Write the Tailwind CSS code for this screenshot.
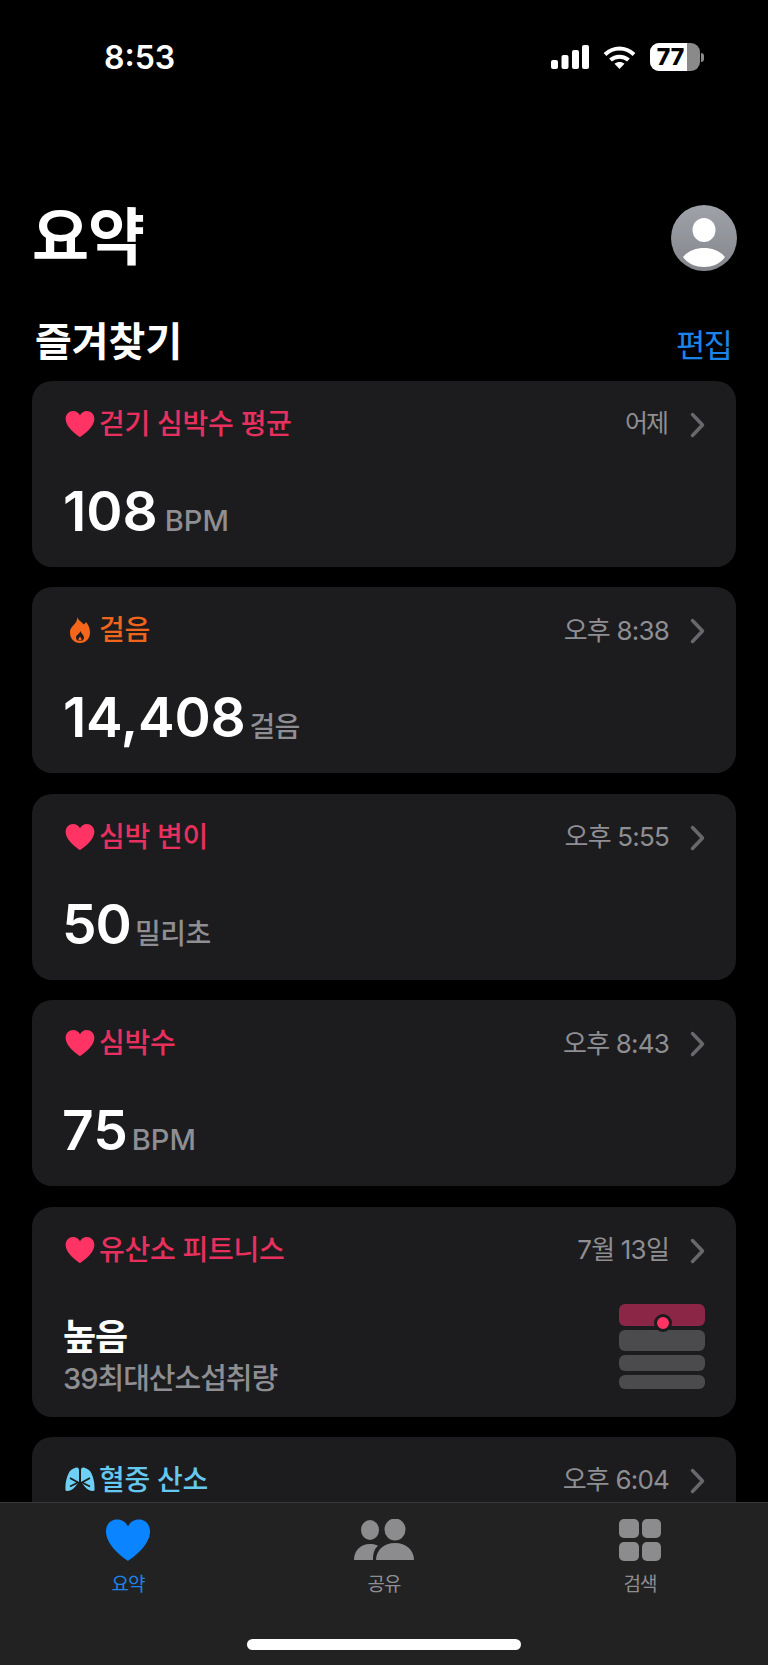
<!DOCTYPE html>
<html lang="ko">
<head>
    <meta charset="UTF-8">
    <meta name="viewport" content="width=device-width, initial-scale=1.0">
    <title>요약</title>
    <script src="https://cdn.jsdelivr.net/npm/@tailwindcss/browser@4"></script>
</head>
<body class="bg-black text-white font-['Inter','Noto_Sans_CJK_KR',sans-serif]">
<div class="relative h-[1665px] w-[768px] overflow-hidden">

    <!-- status bar -->
    <div class="flex h-[80px] items-start justify-between pt-[40px] pl-[104px] pr-[64px]">
        <span class="text-[32px] leading-[36px] font-semibold">8:53</span>
        <div class="flex items-center gap-[14px] pt-[3px]">
            <svg width="38" height="24" viewBox="0 0 38 24" fill="#fff">
                <rect x="0" y="15" width="7" height="9" rx="2"/>
                <rect x="10.5" y="10" width="7" height="14" rx="2"/>
                <rect x="21" y="5" width="7" height="19" rx="2"/>
                <rect x="31" y="0" width="7" height="24" rx="2"/>
            </svg>
            <svg width="33" height="23" viewBox="0 0 33 23" fill="none" stroke="#fff" stroke-width="4">
                <path d="M2 8.5C10.500 0.500 22.500 0.500 31 8.500"/>
                <path d="M7.500 14C12.500 9.500 20.500 9.500 25.500 14"/>
                <path d="M16.500 23L11.500 17.800C14.500 15.500 18.500 15.500 21.500 17.800Z" fill="#fff" stroke="none"/>
            </svg>
            <div class="flex items-center gap-[1px]">
                <div class="flex h-[28px] w-[50px] overflow-hidden rounded-[9px] bg-[#8a8a8a]">
                    <div class="flex h-full w-[37px] items-center justify-center bg-white pl-[4px] text-[23px] font-extrabold text-black">77</div>
                </div>
                <div class="h-[9px] w-[3px] rounded-r-full bg-[#8a8a8a]"></div>
            </div>
        </div>
    </div>

    <!-- title -->
    <div class="mt-[125px] flex items-center justify-between pl-[32px] pr-[31px]">
        <h1 class="text-[62px] leading-[66px] font-bold tracking-[-1px]">요약</h1>
        <svg width="66" height="66" viewBox="0 0 66 66">
            <defs>
                <linearGradient id="av" x1="0" y1="0" x2="0" y2="1">
                    <stop offset="0" stop-color="#9fa2a8"/>
                    <stop offset="1" stop-color="#84868c"/>
                </linearGradient>
            </defs>
            <circle cx="33" cy="33" r="33" fill="url(#av)"/>
            <ellipse cx="33" cy="25" rx="11.500" ry="12" fill="#fff"/>
            <path d="M12 52C17 46 25 43 33 43C41 43 49 46 54 52C49 59 41 62 33 62C25 62 17 59 12 52Z" fill="#fff"/>
        </svg>
    </div>

    <!-- section header -->
    <div class="mt-[45px] flex h-[51px] items-center justify-between pl-[35px] pr-[37px]">
        <h2 class="text-[40px] leading-[44px] font-semibold">즐겨찾기</h2>
        <span class="pt-[8px] text-[32px] leading-[36px] tracking-[-2px] text-[#1c84e8]">편집</span>
    </div>

    <!-- cards -->
    <div class="mt-[14px] flex flex-col gap-[20.400px] px-[32px]">

        <section class="flex h-[186px] flex-col rounded-[20px] bg-[#1c1c1e] pt-[24px] pr-[31px] pl-[33px]">
            <div class="flex h-[38px] items-center">
                <svg width="30" height="28" viewBox="0 0 24 22" fill="#ff3364"><path d="M12 21.500C12 21.500 0.500 14.500 0.500 6.800C0.500 3 3.300 0.500 6.500 0.500C9 0.500 11 1.800 12 4C13 1.800 15 0.500 17.500 0.500C20.700 0.500 23.500 3 23.500 6.800C23.500 14.500 12 21.500 12 21.500Z"/></svg>
                <span class="ml-[4px] text-[28px] font-medium tracking-[-0.300px] text-[#e8305f]">걷기 심박수 평균</span>
                <span class="ml-auto text-[25px] tracking-[-2px] text-[#8e8e93]">어제</span>
                <svg class="ml-[23px] mt-[2px]" width="15" height="26" viewBox="0 0 15 26" fill="none" stroke="#68686c" stroke-width="3.500" stroke-linecap="round" stroke-linejoin="round"><path d="M2.500 2.500L12.500 13L2.500 23.500"/></svg>
            </div>
            <div class="-ml-[2px] mt-[38px] flex items-baseline">
                <span class="text-[55px] leading-[60px] font-semibold">108</span>
                <span class="ml-[7px] text-[29px] font-medium text-[#8e8e93]">BPM</span>
            </div>
        </section>

        <section class="flex h-[186px] flex-col rounded-[20px] bg-[#1c1c1e] pt-[24px] pr-[31px] pl-[33px]">
            <div class="flex h-[38px] items-center">
                <svg class="ml-[5px] mr-[5px]" width="20" height="26" viewBox="0 0 20 26"><path d="M7 0C8 3 11 4.500 14 7.500C15 6.500 15.500 6 16 5C18.500 8 20 11 20 15.500C20 21.500 16 26 10 26C4 26 0 21.500 0 15.500C0 11 3 9 5 6.500C6.500 4.500 7.500 2.500 7 0Z" fill="#f4661b"/><path d="M10.500 14C11 16.500 14 18 14 20.500C14 23 12 24 10 24C8 24 6 23 6 20.500C6 18 9.500 17 10.500 14Z" fill="#1c1c1e"/><path d="M10 19.500C10.500 20.500 11.500 21 11.500 22C11.500 23 10.800 23.500 10 23.500C9.200 23.500 8.500 23 8.500 22C8.500 21 9.500 20.500 10 19.500Z" fill="#f4661b"/></svg>
                <span class="ml-[4px] text-[28px] font-medium tracking-[-0.300px] text-[#f0641c]">걸음</span>
                <span class="ml-auto text-[26px] tracking-[-0.800px] text-[#8e8e93]">오후 8:38</span>
                <svg class="ml-[21px] mt-[2px]" width="15" height="26" viewBox="0 0 15 26" fill="none" stroke="#68686c" stroke-width="3.500" stroke-linecap="round" stroke-linejoin="round"><path d="M2.500 2.500L12.500 13L2.500 23.500"/></svg>
            </div>
            <div class="-ml-[2px] mt-[38px] flex items-baseline">
                <span class="text-[55px] leading-[60px] font-semibold tracking-[-0.200px]">14,408</span>
                <span class="ml-[4px] text-[28px] font-medium tracking-[-0.800px] text-[#8e8e93]">걸음</span>
            </div>
        </section>

        <section class="flex h-[186px] flex-col rounded-[20px] bg-[#1c1c1e] pt-[24px] pr-[31px] pl-[33px]">
            <div class="flex h-[38px] items-center">
                <svg width="30" height="28" viewBox="0 0 24 22" fill="#ff3364"><path d="M12 21.500C12 21.500 0.500 14.500 0.500 6.800C0.500 3 3.300 0.500 6.500 0.500C9 0.500 11 1.800 12 4C13 1.800 15 0.500 17.500 0.500C20.700 0.500 23.500 3 23.500 6.800C23.500 14.500 12 21.500 12 21.500Z"/></svg>
                <span class="ml-[4px] text-[28px] font-medium tracking-[-0.300px] text-[#e8305f]">심박 변이</span>
                <span class="ml-auto text-[26px] tracking-[-0.800px] text-[#8e8e93]">오후 5:55</span>
                <svg class="ml-[21px] mt-[2px]" width="15" height="26" viewBox="0 0 15 26" fill="none" stroke="#68686c" stroke-width="3.500" stroke-linecap="round" stroke-linejoin="round"><path d="M2.500 2.500L12.500 13L2.500 23.500"/></svg>
            </div>
            <div class="-ml-[3px] mt-[38px] flex items-baseline">
                <span class="text-[55px] leading-[60px] font-semibold tracking-[-1px]">50</span>
                <span class="ml-[4px] text-[28px] font-medium tracking-[-0.500px] text-[#8e8e93]">밀리초</span>
            </div>
        </section>

        <section class="flex h-[186px] flex-col rounded-[20px] bg-[#1c1c1e] pt-[24px] pr-[31px] pl-[33px]">
            <div class="flex h-[38px] items-center">
                <svg width="30" height="28" viewBox="0 0 24 22" fill="#ff3364"><path d="M12 21.500C12 21.500 0.500 14.500 0.500 6.800C0.500 3 3.300 0.500 6.500 0.500C9 0.500 11 1.800 12 4C13 1.800 15 0.500 17.500 0.500C20.700 0.500 23.500 3 23.500 6.800C23.500 14.500 12 21.500 12 21.500Z"/></svg>
                <span class="ml-[4px] text-[28px] font-medium tracking-[-0.300px] text-[#e8305f]">심박수</span>
                <span class="ml-auto text-[26px] tracking-[-0.800px] text-[#8e8e93]">오후 8:43</span>
                <svg class="ml-[21px] mt-[2px]" width="15" height="26" viewBox="0 0 15 26" fill="none" stroke="#68686c" stroke-width="3.500" stroke-linecap="round" stroke-linejoin="round"><path d="M2.500 2.500L12.500 13L2.500 23.500"/></svg>
            </div>
            <div class="-ml-[3px] mt-[38px] flex items-baseline">
                <span class="text-[55px] leading-[60px] font-semibold">75</span>
                <span class="ml-[4px] text-[29px] font-medium text-[#8e8e93]">BPM</span>
            </div>
        </section>

        <section class="flex h-[210px] flex-col rounded-[20px] bg-[#1c1c1e] pt-[24px] pr-[31px] pl-[33px]">
            <div class="flex h-[38px] items-center">
                <svg width="30" height="28" viewBox="0 0 24 22" fill="#ff3364"><path d="M12 21.500C12 21.500 0.500 14.500 0.500 6.800C0.500 3 3.300 0.500 6.500 0.500C9 0.500 11 1.800 12 4C13 1.800 15 0.500 17.500 0.500C20.700 0.500 23.500 3 23.500 6.800C23.500 14.500 12 21.500 12 21.500Z"/></svg>
                <span class="ml-[4px] text-[28px] font-medium tracking-[-0.300px] text-[#e8305f]">유산소 피트니스</span>
                <span class="ml-auto text-[26px] tracking-[-0.800px] text-[#8e8e93]">7월 13일</span>
                <svg class="ml-[21px] mt-[2px]" width="15" height="26" viewBox="0 0 15 26" fill="none" stroke="#68686c" stroke-width="3.500" stroke-linecap="round" stroke-linejoin="round"><path d="M2.500 2.500L12.500 13L2.500 23.500"/></svg>
            </div>
            <div class="flex items-start justify-between">
                <div class="-ml-[2px] pt-[45px]">
                    <div class="text-[36px] leading-[46px] font-semibold tracking-[-1px]">높음</div>
                    <div class="text-[29px] leading-[38px] font-medium tracking-[-1px] text-[#8e8e93]">39최대산소섭취량</div>
                </div>
                <div class="relative mt-[35px] flex w-[86px] flex-col gap-[4px]">
                    <div class="h-[22px] rounded-[6px] bg-[#8c2646]"></div>
                    <div class="h-[21px] rounded-[6px] bg-[#4b4b4e]"></div>
                    <div class="h-[16px] rounded-[6px] bg-[#4b4b4e]"></div>
                    <div class="h-[14px] rounded-[6px] bg-[#4b4b4e]"></div>
                    <div class="absolute top-[10px] left-[35px] h-[18px] w-[18px] rounded-full border-[3px] border-[#1c1c1e] bg-[#ff3364]"></div>
                </div>
            </div>
        </section>

        <section class="flex h-[186px] flex-col rounded-[20px] bg-[#1c1c1e] pt-[24px] pr-[31px] pl-[33px]">
            <div class="flex h-[38px] items-center">
                <svg width="30" height="25" viewBox="0 0 30 25"><path d="M10 1C12.500 0 14 1 14 3V15L9 21C6 24 1 25 0.500 23C0 16 2 8 5 4C6.500 2.500 8 1.500 10 1Z" fill="#6fd0f5"/><path d="M20 1C17.500 0 16 1 16 3V15L21 21C24 24 29 25 29.500 23C30 16 28 8 25 4C23.500 2.500 22 1.500 20 1Z" fill="#6fd0f5"/><path d="M5 11L13 15.500L5 19.500M25 11L17 15.500L25 19.500" fill="none" stroke="#1c1c1e" stroke-width="1.800"/><path d="M15 0V16" stroke="#1c1c1e" stroke-width="1.500"/></svg>
                <span class="ml-[4px] text-[28px] font-medium tracking-[-0.300px] text-[#65c8ef]">혈중 산소</span>
                <span class="ml-auto text-[26px] tracking-[-0.800px] text-[#8e8e93]">오후 6:04</span>
                <svg class="ml-[21px] mt-[2px]" width="15" height="26" viewBox="0 0 15 26" fill="none" stroke="#68686c" stroke-width="3.500" stroke-linecap="round" stroke-linejoin="round"><path d="M2.500 2.500L12.500 13L2.500 23.500"/></svg>
            </div>
        </section>
    </div>

    <!-- tab bar -->
    <nav class="absolute right-0 bottom-0 left-0 h-[163px] border-t border-[#38383a] bg-[#222223]">
        <div class="grid grid-cols-3 pt-[16px]">
            <div class="flex flex-col items-center">
                <svg width="46" height="42" viewBox="0 0 46 42" fill="#0a84ff"><path d="M23 42C23 42 1 28 1 12.500C1 5 6 0.500 12 0.500C17 0.500 21 3 23 7.500C25 3 29 0.500 34 0.500C40 0.500 45 5 45 12.500C45 28 23 42 23 42Z"/></svg>
                <span class="mt-[12px] text-[19px] leading-[24px] tracking-[-1px] text-[#1c84e8]">요약</span>
            </div>
            <div class="flex flex-col items-center">
                <svg width="62" height="42" viewBox="0 0 62 42" fill="#8c8c8f">
                    <ellipse cx="17" cy="11" rx="9" ry="10"/>
                    <ellipse cx="42" cy="10.500" rx="10.500" ry="11"/>
                    <path d="M1 41C1 32 7 25 17 25C20 25 23 25.500 25 27C21 30 20 35 20 41Z"/>
                    <path d="M23 41C23 31 31 24 42 24C53 24 61 31 61 41Z"/>
                </svg>
                <span class="mt-[12px] text-[19px] leading-[24px] tracking-[-1px] text-[#8e8e93]">공유</span>
            </div>
            <div class="flex flex-col items-center">
                <div class="grid h-[42px] w-[42px] grid-cols-2 gap-x-[3px] gap-y-[4px]">
                    <div class="rounded-[5px] bg-[#8c8c8f]"></div>
                    <div class="rounded-[5px] bg-[#8c8c8f]"></div>
                    <div class="rounded-[5px] bg-[#8c8c8f]"></div>
                    <div class="rounded-[5px] bg-[#8c8c8f]"></div>
                </div>
                <span class="mt-[12px] text-[19px] leading-[24px] tracking-[-1px] text-[#8e8e93]">검색</span>
            </div>
        </div>
        <div class="absolute bottom-[15px] left-[247px] h-[11px] w-[274px] rounded-full bg-white"></div>
    </nav>
</div>
</body>
</html>
